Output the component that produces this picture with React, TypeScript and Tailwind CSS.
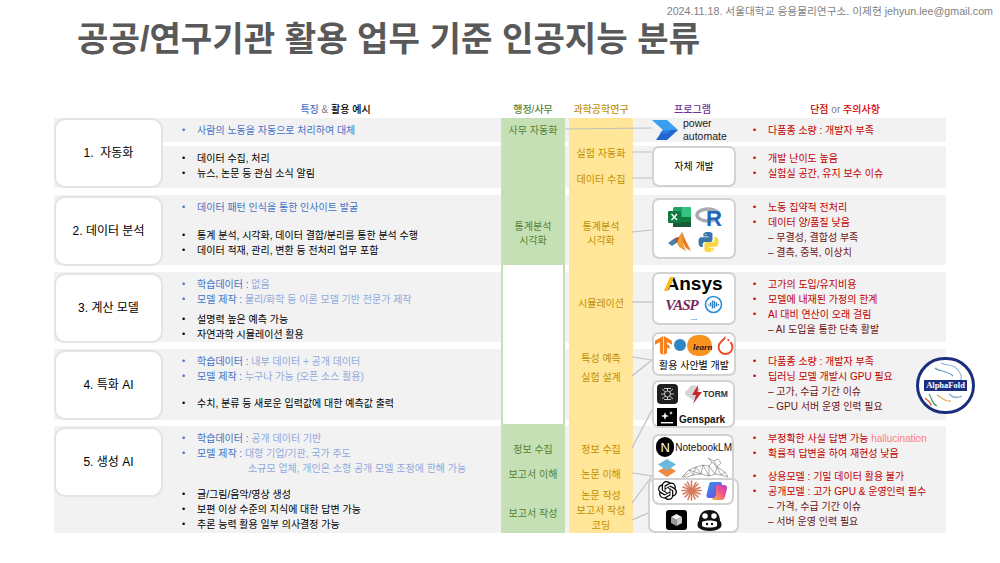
import { ReactNode } from "react";
import { SiOpenai, SiPytorch, SiTensorflow } from "react-icons/si";

const Line = ({ color, children, className = "" }: { color: string; children: ReactNode; className?: string }) => (
  <div className={`flex h-[15px] items-center whitespace-nowrap ${color} ${className}`}>
    <span className="w-[15px] text-[9px]">•</span>
    <span>{children}</span>
  </div>
);

const Dash = ({ children }: { children: ReactNode }) => (
  <div className="flex h-[15px] items-center whitespace-nowrap pl-[15px] text-[#6b1414]">– {children}</div>
);

const Blue = ({ head, children, className = "" }: { head: string; children?: ReactNode; className?: string }) => (
  <Line color="text-[#4472c4]" className={className}>
    {head}
    {children && <span className="text-[#8faadc]">{children}</span>}
  </Line>
);

const Black = ({ children, className = "" }: { children: ReactNode; className?: string }) => (
  <Line color="text-black" className={className}>{children}</Line>
);

const Red = ({ children, className = "" }: { children: ReactNode; className?: string }) => (
  <Line color="text-[#c00000]" className={className}>{children}</Line>
);

const Name = ({ children, className }: { children: ReactNode; className: string }) => (
  <div className={`flex h-[70px] w-[109px] items-center justify-center rounded-[11px] border-2 border-[#e4e4e4] bg-white text-[12px] text-black ${className}`}>
    {children}
  </div>
);

const Tag = ({ children, className = "" }: { children: ReactNode; className?: string }) => (
  <div className={`flex h-[14px] items-center justify-center whitespace-nowrap ${className}`}>{children}</div>
);

const PowerAutomate = () => (
  <svg width="26" height="20" viewBox="0 0 26 20">
    <polygon points="0,0 15,0 26,10 11,10" fill="#3b9ff0" />
    <polygon points="11,10 26,10 15,20 4,20" fill="#1f66d1" />
    <polygon points="11,10 19,10 15,13.5 7.5,13.5" fill="#2f83e4" />
  </svg>
);

const Excel = () => (
  <svg width="23" height="20" viewBox="0 0 23 20">
    <rect x="5" width="18" height="20" rx="1.5" fill="#21a366" />
    <rect x="14" y="0" width="9" height="10" fill="#33c481" />
    <rect x="5" y="10" width="9" height="5" fill="#107c41" />
    <rect x="14" y="10" width="9" height="5" fill="#107c41" />
    <rect x="5" y="15" width="18" height="5" fill="#185c37" />
    <rect y="4" width="13" height="12" rx="1" fill="#107c41" />
    <path d="M3.5 7 L9 13 M9 7 L3.5 13" stroke="#fff" strokeWidth="1.4" />
  </svg>
);

const RLogo = () => (
  <div className="relative h-[20px] w-[26px]">
    <svg width="26" height="20" viewBox="0 0 26 20">
      <ellipse cx="13" cy="8" rx="11" ry="6" fill="none" stroke="#a9abb0" strokeWidth="3.5" />
    </svg>
    <span className="absolute right-[-1px] top-[1px] text-[22px] leading-[22px] font-bold text-[#2268b8]">R</span>
  </div>
);

const Matlab = () => (
  <svg width="23" height="20" viewBox="0 0 23 20">
    <polygon points="0,11 7,6 10,10 4,14" fill="#4d7fa8" />
    <polygon points="7,6 11,5 14,0 9,11" fill="#b8481c" />
    <polygon points="14,0 17,7 23,19 18,16 12,5" fill="#e8792b" />
    <polygon points="9,11 14,0 15,11 18,19 11,15" fill="#f0a030" />
  </svg>
);

const PythonLogo = () => (
  <svg width="21" height="20" viewBox="0 0 110 110">
    <path d="M54 0C25 0 27 12 27 12v13h28v4H16S0 27 0 55s14 27 14 27h9V69s-1-14 14-14h27s13 0 13-13V14S81 0 54 0z" fill="#3a76a8" />
    <path d="M54 0C25 0 27 12 27 12v13h28v4H16S0 27 0 55s14 27 14 27h9V69s-1-14 14-14h27s13 0 13-13V14S81 0 54 0z" fill="#fdd645" transform="rotate(180 55 55)" />
    <circle cx="38" cy="13" r="4" fill="#fff" />
    <circle cx="72" cy="97" r="4" fill="#fff" />
  </svg>
);

const Comsol = () => (
  <svg width="19" height="19" viewBox="0 0 19 19">
    <circle cx="9.5" cy="9.5" r="8" fill="none" stroke="#2c8fd6" strokeWidth="1.6" />
    <path d="M4.5 9.5v1 M6.5 7.5v4 M8.5 5.5v8 M10.5 6v7 M12.5 7.5v4 M14.5 9v1.5" stroke="#2f7fc0" strokeWidth="1.4" />
  </svg>
);

const SkLearn = () => (
  <div className="relative flex h-[20px] w-[38px] items-center">
    <div className="h-[12px] w-[12px] rounded-full bg-[#2f86c7]" />
    <div className="ml-[1px] flex h-[21px] w-[25px] items-center justify-center rounded-full bg-[#f7931e]" />
    <span className="absolute right-[-1px] top-[7px] font-['Liberation_Serif',serif] text-[9px] leading-[10px] font-bold italic text-[#1c1c1c]">learn</span>
  </div>
);

const Spider = () => (
  <svg width="21" height="20" viewBox="0 0 21 20">
    <rect width="21" height="20" rx="4" fill="#1f1f1f" />
    <g stroke="#e8e8e8" strokeWidth="0.8" fill="none">
      <circle cx="10.5" cy="10" r="3" />
      <path d="M5 5l3.5 3M16 5l-3.5 3M5 15l3.5-3M16 15l-3.5-3M4 10h3.5M17 10h-3.5M10.5 4v3M10.5 16v-3" />
      <path d="M7 4.5h7M7 15.5h7" />
    </g>
  </svg>
);

const Storm = () => (
  <svg width="19" height="20" viewBox="0 0 19 20">
    <path d="M3 12C0 10 1 6 4 6 5 2 9 0 12 2l4 3-3 9-4 2z" fill="#d4d4d4" />
    <polygon points="14,1 8,11 12,11 9,20 18,8 13.5,8" fill="#c4262e" />
  </svg>
);

const GensparkIcon = () => (
  <svg width="20" height="18" viewBox="0 0 20 18">
    <rect width="20" height="18" fill="#000" />
    <path d="M8 4l1 3 3 1-3 1-1 3-1-3-3-1 3-1z M14 3l.6 1.4L16 5l-1.4.6L14 7l-.6-1.4L12 5l1.4-.6z" fill="#fff" />
    <rect x="4" y="14" width="12" height="1.4" fill="#fff" />
  </svg>
);

const Stack = () => (
  <svg width="18" height="18" viewBox="0 0 18 18">
    <polygon points="9,7 18,12 9,18 0,12" fill="#f0883e" />
    <polygon points="9,0 18,5.5 9,11.5 0,5.5" fill="#6db9dc" />
  </svg>
);

const Rabbit = () => (
  <svg width="48" height="20" viewBox="0 0 48 20">
    <g stroke="#5a5a5a" strokeWidth="0.5" fill="none">
      <path d="M1 19L8 12 15 9 22 7 28 8 31 4 27 0 33 3 36 9 44 14 47 19 40 17 34 16 28 18 20 16 12 17 6 19z" />
      <path d="M8 12L12 17M15 9L20 16M22 7L28 18M28 8L34 16M31 4L36 9M36 9L34 16M36 9L40 17M15 9L12 17M22 7L20 16M28 8L28 18M8 12L20 16" />
      <path d="M33 3L37 1 40 5 36 9M44 14L40 17M3 18L8 15" />
    </g>
  </svg>
);

const Claude = () => (
  <svg width="21" height="21" viewBox="0 0 21 21">
    <g stroke="#d9775a" strokeWidth="1.5" strokeLinecap="round">
      <path d="M10.5 10.5V1M10.5 10.5V20M10.5 10.5H1M10.5 10.5H20" />
      <path d="M10.5 10.5L4 4M10.5 10.5L17 4M10.5 10.5L4 17M10.5 10.5L17 17" />
      <path d="M10.5 10.5L6.5 2M10.5 10.5L15 2.5M10.5 10.5L2 7M10.5 10.5L19 7.5M10.5 10.5L2 14M10.5 10.5L19 14M10.5 10.5L7 19.5M10.5 10.5L14 19" />
    </g>
  </svg>
);

const Copilot = () => (
  <svg width="22" height="20" viewBox="0 0 22 20">
    <defs>
      <linearGradient id="cpa" x1="0" y1="0" x2="1" y2="1">
        <stop offset="0" stopColor="#2f9bea" />
        <stop offset="1" stopColor="#7a3fe0" />
      </linearGradient>
      <linearGradient id="cpb" x1="0" y1="1" x2="1" y2="0">
        <stop offset="0" stopColor="#f6b73c" />
        <stop offset="0.6" stopColor="#ef4f8f" />
        <stop offset="1" stopColor="#b03fd0" />
      </linearGradient>
    </defs>
    <path d="M5 1h9c1.5 0 2 1 2 2L12 15c-.5 1.5-1.5 2-3 2H3c-2 0-3-1.5-2.400-3.500L3 3.500C3.400 2 4 1 5 1z" fill="url(#cpa)" />
    <path d="M10 4h8c2 0 3.500 1.500 3 3.500L19 16c-.5 2-1.500 3-3.500 3H7c-1 0-1-1-.5-1.500 2-1 3-2 3.500-4z" fill="url(#cpb)" />
  </svg>
);

const CubeTile = () => (
  <svg width="21" height="20" viewBox="0 0 21 20">
    <rect width="21" height="20" rx="3" fill="#000" />
    <polygon points="10.500,4 16,7 10.500,10 5,7" fill="#f2f2f2" />
    <polygon points="5,7 10.500,10 10.500,16 5,13" fill="#9a9a9a" />
    <polygon points="16,7 10.500,10 10.500,16 16,13" fill="#c9c9c9" />
  </svg>
);

const GogglesHead = () => (
  <svg width="25" height="22" viewBox="0 0 25 22">
    <path d="M2 12C2 4 7 1 12.500 1S23 4 23 12c2 1 2 6 0 7-2 2-6 3-10.500 3S4 21 2 19c-2-1-2-6 0-7z" fill="#111" />
    <circle cx="8" cy="7" r="3.500" fill="#fff" stroke="#111" strokeWidth="1.500" />
    <circle cx="17" cy="7" r="3.500" fill="#fff" stroke="#111" strokeWidth="1.500" />
    <path d="M5 13c3-2 12-2 15 0v4c-3 2-12 2-15 0z" fill="#fff" />
    <circle cx="10" cy="15" r="1.200" fill="#111" />
    <circle cx="15" cy="15" r="1.200" fill="#111" />
  </svg>
);

const AlphaFold = () => (
  <div className="absolute left-[862px] top-[239px] flex h-[57px] w-[59px] items-center justify-center overflow-hidden rounded-full border-[3px] border-[#1c2f7f] bg-white">
    <svg width="53" height="51" viewBox="0 0 53 51" className="absolute left-0 top-0">
      <g fill="none" strokeWidth="1.200">
        <path d="M22 3c6 3 12 1 16 6s6 8 3 12" stroke="#8fb8d8" />
        <path d="M16 8c4 4 12 2 18 8" stroke="#5fa0c8" />
        <path d="M10 34c4 6 2 9 8 12" stroke="#3e9a6a" />
        <path d="M18 35c5 3 8 7 14 6" stroke="#d9a83a" />
        <path d="M30 34c4 4 9 4 13 2" stroke="#7fb2d0" />
        <path d="M6 38c3 3 6 4 6 8" stroke="#d9683a" />
      </g>
    </svg>
    <span className="relative bg-[#1c2f7f] px-[2px] font-['Liberation_Serif',serif] text-[8.500px] leading-[11px] font-bold text-white">AlphaFold</span>
  </div>
);

const ProgramCard = ({ children, className }: { children: ReactNode; className: string }) => (
  <div className={`rounded-[7px] border-2 border-[#d2d2d2] bg-white ${className}`}>{children}</div>
);

const Programs = () => (
  <div className="col-start-5 row-start-1 row-span-11 flex flex-col items-start">
    <div className="ml-[19px] flex h-[24px] items-center">
      <PowerAutomate />
      <div className="ml-[5px] pb-[1px] font-['Liberation_Sans',sans-serif] text-[10.500px] leading-[12.500px] text-[#1a1a1a]">
        power
        <br />
        automate
      </div>
    </div>
    <ProgramCard className="ml-[19px] mt-[4px] flex h-[42px] w-[84px] items-center justify-center text-[10px] text-black">자체 개발</ProgramCard>
    <ProgramCard className="ml-[19px] mt-[11px] grid h-[63px] w-[84px] grid-cols-[26px_26px] gap-x-[3px] items-center justify-items-center pb-[2px] pl-[12px] pt-[4px]">
      <Excel />
      <RLogo />
      <Matlab />
      <PythonLogo />
    </ProgramCard>
    <ProgramCard className="ml-[19px] mt-[13px] flex h-[54px] w-[84px] flex-col items-center">
      <div className="relative mt-[-1px] h-[22px] font-['Liberation_Sans',sans-serif] text-[19px] leading-[22px] font-bold text-black">
        Ansys
        <span className="absolute left-[2px] top-[4px] h-[14px] w-[4px] skew-x-[-24deg] bg-[#ffb71b]" />
      </div>
      <div className="flex items-center gap-[6px]">
        <span className="font-['Liberation_Serif',serif] text-[15px] leading-[18px] font-bold italic tracking-[-1px] text-[#7a2a5e]">VASP</span>
        <Comsol />
      </div>
      <div className="text-[8px] leading-[8px] text-black">...</div>
    </ProgramCard>
    <ProgramCard className="ml-[19px] mt-[7px] flex h-[45px] w-[84px] flex-col items-center">
      <div className="flex h-[23px] items-center gap-[1px]">
        <SiTensorflow className="h-[19px] w-[19px] text-[#f58220]" />
        <SkLearn />
        <SiPytorch className="ml-[3px] h-[19px] w-[19px] text-[#ee4c2c]" />
      </div>
      <div className="mt-[2px] text-[10px] leading-[14px] whitespace-nowrap text-black">활용 사안별 개발</div>
    </ProgramCard>
    <ProgramCard className="ml-[19px] mt-[4px] flex h-[50px] w-[83px] flex-col pl-[3px] pt-[2px]">
      <div className="flex h-[21px] items-center">
        <Spider />
        <div className="ml-[6px]"><Storm /></div>
        <span className="font-['Liberation_Sans',sans-serif] text-[8.500px] font-bold text-[#333]">TORM</span>
      </div>
      <div className="mt-[3px] flex h-[18px] items-end">
        <GensparkIcon />
        <span className="ml-[2px] font-['Liberation_Sans',sans-serif] text-[10px] leading-[12px] font-bold text-[#111]">Genspark</span>
      </div>
    </ProgramCard>
    <ProgramCard className="ml-[19px] mt-[6px] h-[50px] w-[82px] pl-[2px]">
      <div className="flex h-[22px] items-center">
        <div className="flex h-[20px] w-[20px] items-center justify-center rounded-full bg-black font-['Liberation_Sans',sans-serif] text-[13px] text-white">N</div>
        <span className="ml-[1px] font-['Liberation_Sans',sans-serif] text-[10px] text-[#111]">NotebookLM</span>
      </div>
      <div className="flex h-[20px] items-center pl-[2px]">
        <Stack />
        <div className="ml-[5px]"><Rabbit /></div>
      </div>
    </ProgramCard>
    <div className="relative ml-[15px] mt-[-5px] h-[55px] w-[91px] rounded-[7px] border-2 border-[#d2d2d2] bg-white">
      <div className="ml-[2px] flex h-[25px] w-[82px] items-center justify-center gap-[4px] rounded-b-[7px] border-x-2 border-b-2 border-[#d2d2d2] pb-[1px]">
        <SiOpenai className="h-[19px] w-[19px] text-black" />
        <Claude />
        <Copilot />
      </div>
      <div className="mt-[4px] flex items-center justify-center gap-[10px]">
        <CubeTile />
        <GogglesHead />
      </div>
    </div>
  </div>
);

const Connectors = () => (
  <svg className="absolute left-[-54px] top-[-118px] h-[563px] w-[1000px]" viewBox="0 0 1000 563" fill="none">
    <g stroke="#bfbfbf" strokeWidth="1.200">
      <path d="M565 129L652 128" />
      <path d="M632 152H652M632 178H652" />
      <path d="M632 232L652 230" />
      <path d="M632 302H652" />
      <path d="M632 357L652 360M632 376L652 360" />
      <path d="M632 448L652 410" />
      <path d="M632 473L652 476M632 503L652 476" />
      <path d="M632 520L648 513" />
    </g>
  </svg>
);

export default function App() {
  return (
    <div className="flex h-[563px] w-[1000px] flex-col overflow-hidden bg-white font-['Liberation_Sans','Noto_Sans_CJK_KR',sans-serif] text-[10px]">
      <div className="h-[20px] pr-[7px] pt-[1px] text-right text-[10.700px] leading-[20px] text-[#7f7f7f]">
        2024.11.18. 서울대학교 응용물리연구소. 이제현 jehyun.lee@gmail.com
      </div>
      <h1 className="h-[38px] pl-[77px] text-[34.200px] leading-[38px] font-bold text-[#595959]">공공/연구기관 활용 업무 기준 인공지능 분류</h1>

      <div className="mt-[42px] ml-[54px] grid h-[18px] w-[892px] grid-cols-[447px_64px_4px_64px_119px_194px] items-center text-center font-medium">
        <div className="pl-[116px] text-[#4472c4]">
          특징 <span className="font-normal text-[#808080]">&amp;</span> <span className="text-black">활용 예시</span>
        </div>
        <div className="text-[#548235]">행정/사무</div>
        <div />
        <div className="whitespace-nowrap text-[#bf9000]">과학공학연구</div>
        <div className="text-[#7030a0]">프로그램</div>
        <div className="pr-[8px] text-[#c00000]">
          단점 <span className="font-normal text-[#808080]">or</span> <span className="text-[#e00000]">주의사항</span>
        </div>
      </div>

      <div className="relative ml-[54px] grid w-[892px] grid-cols-[447px_64px_4px_64px_119px_194px] grid-rows-[24px_4px_42px_7px_70px_7px_70px_7px_71px_6px_107px]">
        {/* gray bands, left text sits in them */}
        <div className="col-span-6 col-start-1 row-start-1 bg-[#f2f2f2] pl-[128px] pt-[5px]">
          <Blue head="사람의 노동을 자동으로 처리하여 대체" />
        </div>
        <div className="col-span-6 col-start-1 row-start-3 bg-[#f2f2f2] pl-[128px] pt-[5px]">
          <Black>데이터 수집, 처리</Black>
          <Black>뉴스, 논문 등 관심 소식 알림</Black>
        </div>
        <div className="col-span-6 col-start-1 row-start-5 bg-[#f2f2f2] pl-[128px] pt-[5px]">
          <Blue head="데이터 패턴 인식을 통한 인사이트 발굴" />
          <Black className="mt-[13px]">통계 분석, 시각화, 데이터 결합/분리를 통한 분석 수행</Black>
          <Black>데이터 적재, 관리, 변환 등 전처리 업무 포함</Black>
        </div>
        <div className="col-span-6 col-start-1 row-start-7 bg-[#f2f2f2] pl-[128px] pt-[5px]">
          <Blue head="학습데이터 : ">없음</Blue>
          <Blue head="모델 제작 : ">물리/화학 등 이론 모델 기반 전문가 제작</Blue>
          <Black className="mt-[5px]">설명력 높은 예측 가능</Black>
          <Black>자연과학 시뮬레이션 활용</Black>
        </div>
        <div className="col-span-6 col-start-1 row-start-9 bg-[#f2f2f2] pl-[128px] pt-[5px]">
          <Blue head="학습데이터 : ">내부 데이터 + 공개 데이터</Blue>
          <Blue head="모델 제작 : ">누구나 가능 (오픈 소스 활용)</Blue>
          <Black className="mt-[12px]">수치, 분류 등 새로운 입력값에 대한 예측값 출력</Black>
        </div>
        <div className="col-span-6 col-start-1 row-start-11 bg-[#f2f2f2] pl-[128px] pt-[5px]">
          <Blue head="학습데이터 : ">공개 데이터 기반</Blue>
          <Blue head="모델 제작 : ">대형 기업/기관, 국가 주도</Blue>
          <div className="h-[15px] pl-[66px] leading-[15px] whitespace-nowrap text-[#8faadc]">소규모 업체, 개인은 소형 공개 모델 조정에 한해 가능</div>
          <Black className="mt-[11px]">글/그림/음악/영상 생성</Black>
          <Black>보편 이상 수준의 지식에 대한 답변 가능</Black>
          <Black>추론 능력 활용 일부 의사결정 가능</Black>
        </div>

        {/* category cards */}
        <Name className="col-start-1 row-start-1 row-span-3">1.&nbsp;&nbsp;자동화</Name>
        <Name className="col-start-1 row-start-5 mt-[1px] h-[69px]">2. 데이터 분석</Name>
        <Name className="col-start-1 row-start-7 mt-[1px] h-[69px]">3. 계산 모델</Name>
        <Name className="col-start-1 row-start-9 mt-[1px] h-[69px]">4. 특화 AI</Name>
        <Name className="col-start-1 row-start-11 mt-[1px] h-[69px]">5. 생성 AI</Name>

        {/* 행정/사무 */}
        <div className="col-start-2 row-start-1 row-span-5 bg-[#c5e0b4] pt-[5px] text-[#548235]">
          <Tag>사무 자동화</Tag>
          <Tag className="mt-[82px]">통계분석</Tag>
          <Tag>시각화</Tag>
        </div>
        <div className="col-start-2 row-start-6 row-span-5 border-2 border-t-0 border-[#c5e0b4] bg-white" />
        <div className="col-start-2 row-start-11 bg-[#c5e0b4] pt-[16px] text-[#548235]">
          <Tag>정보 수집</Tag>
          <Tag className="mt-[11px]">보고서 이해</Tag>
          <Tag className="mt-[25px]">보고서 작성</Tag>
        </div>

        {/* 과학공학연구 */}
        <div className="col-start-4 row-start-1 row-span-11 bg-[#ffe699] text-[#bf9000]">
          <Tag className="mt-[28px]">실험 자동화</Tag>
          <Tag className="mt-[12px]">데이터 수집</Tag>
          <Tag className="mt-[33px]">통계분석</Tag>
          <Tag>시각화</Tag>
          <Tag className="mt-[49px]">시뮬레이션</Tag>
          <Tag className="mt-[41px]">특성 예측</Tag>
          <Tag className="mt-[5px]">실험 설계</Tag>
          <Tag className="mt-[58px]">정보 수집</Tag>
          <Tag className="mt-[11px]">논문 이해</Tag>
          <Tag className="mt-[7px]">논문 작성</Tag>
          <Tag className="mt-[1px]">보고서 작성</Tag>
          <Tag className="mt-[1px]">코딩</Tag>
        </div>

        <Connectors />
        <Programs />

        {/* 단점 */}
        <div className="col-start-6 row-start-1 pl-[1px] pt-[5px]">
          <Red>다품종 소량 : 개발자 부족</Red>
        </div>
        <div className="col-start-6 row-start-3 pl-[1px] pt-[5px]">
          <Red>개발 난이도 높음</Red>
          <Red>실험실 공간, 유지 보수 이슈</Red>
        </div>
        <div className="col-start-6 row-start-5 pl-[1px] pt-[5px]">
          <Red>노동 집약적 전처리</Red>
          <Red>데이터 양/품질 낮음</Red>
          <Dash>무결성, 결합성 부족</Dash>
          <Dash>결측, 중복, 이상치</Dash>
        </div>
        <div className="col-start-6 row-start-7 pl-[1px] pt-[5px]">
          <Red>고가의 도입/유지비용</Red>
          <Red>모델에 내재된 가정의 한계</Red>
          <Red>AI 대비 연산이 오래 걸림</Red>
          <Dash>AI 도입을 통한 단축 활발</Dash>
        </div>
        <div className="col-start-6 row-start-9 pl-[1px] pt-[5px]">
          <Red>다품종 소량 : 개발자 부족</Red>
          <Red>딥러닝 모델 개발시 GPU 필요</Red>
          <Dash>고가, 수급 기간 이슈</Dash>
          <Dash>GPU 서버 운영 인력 필요</Dash>
        </div>
        <div className="col-start-6 row-start-11 pl-[1px] pt-[5px]">
          <Red>
            부정확한 사실 답변 가능 <span className="text-[#ff7c80]">hallucination</span>
          </Red>
          <Red>확률적 답변을 하여 재현성 낮음</Red>
          <Red className="mt-[8px]">상용모델 : 기밀 데이터 활용 불가</Red>
          <Red>공개모델 : 고가 GPU &amp; 운영인력 필수</Red>
          <Dash>가격, 수급 기간 이슈</Dash>
          <Dash>서버 운영 인력 필요</Dash>
        </div>

        <AlphaFold />
      </div>
    </div>
  );
}
